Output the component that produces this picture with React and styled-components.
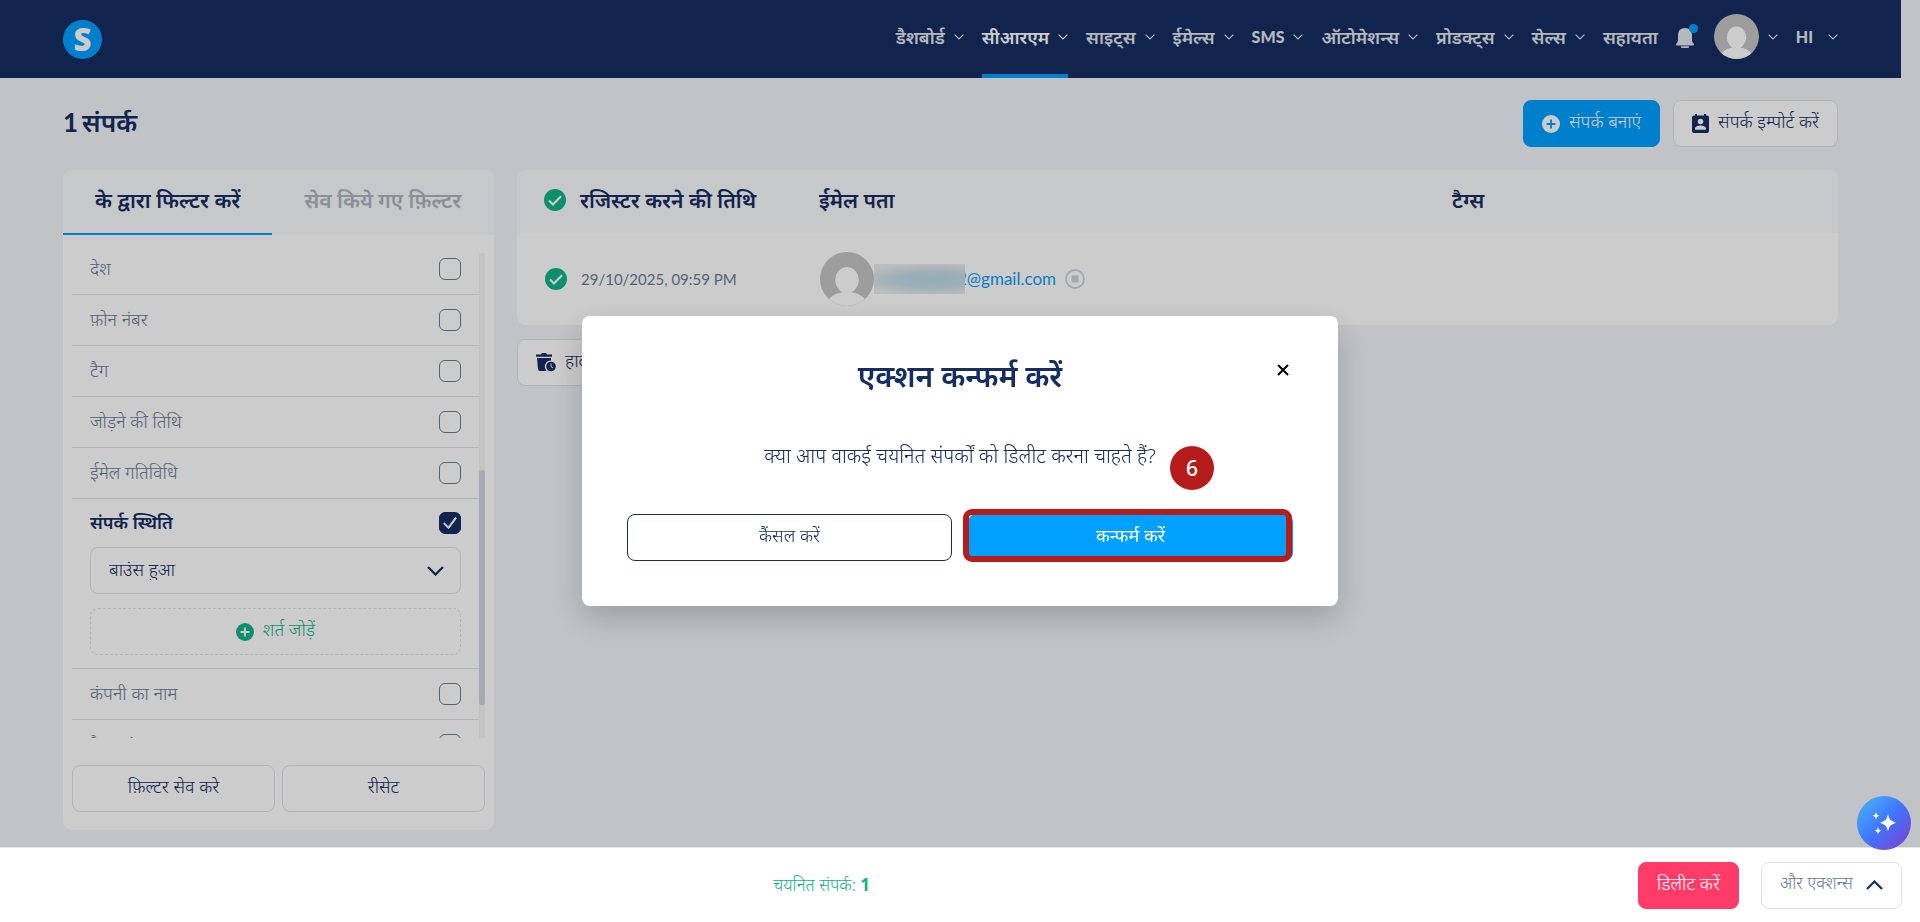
import React from "react";
import styled, { createGlobalStyle } from "styled-components";
import { HiMiniCheck } from "react-icons/hi2";

const GlobalStyle = createGlobalStyle`
  *,
  *::before,
  *::after {
    box-sizing: border-box;
  }

  body {
    margin: 0;
    background: #f3f4f9;
    color: #152d62;
    font-family: "Noto Sans", "Noto Sans Devanagari", sans-serif;
    font-size: 18px;
    font-weight: 300;
    line-height: 22px;
    overflow: hidden;
  }

  button,
  input,
  select {
    font: inherit;
    color: inherit;
  }

  button {
    cursor: pointer;
  }

  h1,
  h2,
  p,
  ul {
    margin: 0;
    padding: 0;
  }

  ul {
    list-style: none;
  }

  a {
    color: inherit;
    text-decoration: none;
  }

  b {
    font-weight: 700;
  }
`;

const Page = styled.div`
  min-height: 100vh;
`;

const Header = styled.header`
  display: flex;
  align-items: center;
  justify-content: space-between;
  height: 78px;
  margin-right: 19px;
  padding: 0 63px;
  background: #152d62;
  color: #e9ebef;
`;

const Logo = styled.a`
  display: flex;
  align-items: center;
  justify-content: center;
  width: 39px;
  height: 39px;
  border-radius: 50%;
  background: #00a0ff;
  color: #fff;
  font-size: 31px;
  font-weight: 900;
`;

const Nav = styled.nav`
  display: flex;
  align-items: center;
  gap: 18px;
  height: 100%;
`;

const NavItem = styled.a`
  display: flex;
  align-items: center;
  gap: ${({ $gap = 9 }) => $gap}px;
  height: 100%;
  padding-bottom: 5px;
  font-family: ${({ $latin }) => ($latin ? "Lato, sans-serif" : "inherit")};
  font-size: ${({ $latin }) => ($latin ? 16 : 18)}px;
  font-weight: ${({ $latin }) => ($latin ? 900 : 600)};
  white-space: nowrap;
  color: ${({ $active }) => ($active ? "#fff" : "#e3e6ec")};
  box-shadow: ${({ $active }) => ($active ? "inset 0 -4px #00a0ff" : "none")};
`;

const Bell = styled.button`
  position: relative;
  display: flex;
  margin-right: 2px;
  padding: 0 0 2px;
  border: 0;
  background: none;
  color: #e3e6ec;
`;

const BellDot = styled.span`
  position: absolute;
  top: -4px;
  right: -4px;
  width: 9px;
  height: 9px;
  border-radius: 50%;
  background: #00a0ff;
`;

const Content = styled.main`
  padding: 22px 82px 0 63px;
`;

const TitleBar = styled.div`
  display: flex;
  align-items: center;
  justify-content: space-between;
  margin-bottom: 23px;
`;

const Title = styled.h1`
  display: flex;
  gap: 4px;
  padding-bottom: 4px;
  font-size: 26px;
  font-weight: 600;
  line-height: 32px;
`;

const Count = styled.span`
  font-family: Lato, "Noto Sans", sans-serif;
  font-weight: 700;
`;

const Actions = styled.div`
  display: flex;
  gap: 13px;
`;

const palettes = {
  plain: { background: "#fff", border: "#dee2e6", color: "#152d62" },
  primary: { background: "#00a0ff", border: "#00a0ff", color: "#fff" },
  outline: { background: "#fff", border: "#152d62", color: "#152d62" },
  danger: { background: "#ff3c69", border: "#ff3c69", color: "#fff" },
};

const Button = styled.button`
  display: flex;
  align-items: center;
  justify-content: center;
  gap: 9px;
  flex: ${({ $grow }) => ($grow ? "1 1 0" : "none")};
  height: 47px;
  padding: 0 18px;
  border: 1px solid ${({ $kind = "plain" }) => palettes[$kind].border};
  border-radius: 8px;
  background: ${({ $kind = "plain" }) => palettes[$kind].background};
  color: ${({ $kind = "plain" }) => palettes[$kind].color};
  font-weight: ${({ $strong }) => ($strong ? 400 : 300)};
  white-space: nowrap;
`;

const ButtonText = styled.span`
  padding-bottom: 5px;
`;

const Columns = styled.div`
  display: grid;
  grid-template-columns: 431px 1fr;
  align-items: start;
  gap: 23px;
`;

const Panel = styled.section`
  border-radius: 9px;
  background: #fff;
  overflow: hidden;
`;

const Tabs = styled.div`
  display: flex;
  height: 65px;
  background: #f9fafc;
`;

const Tab = styled.button`
  padding: 0 32px 4px;
  border: 0;
  border-bottom: 2px solid ${({ $active }) => ($active ? "#00a0ff" : "transparent")};
  background: none;
  color: ${({ $active }) => ($active ? "#152d62" : "#adb5c0")};
  font-size: 21px;
  font-weight: 600;
  white-space: nowrap;
`;

const FilterScroll = styled.div`
  display: grid;
  grid-template-columns: 1fr 6px;
  height: 485px;
  margin: 18px 9px 0;
  overflow: hidden;
`;

const FilterList = styled.ul`
  margin-top: -9px;
`;

const FilterItem = styled.li`
  border-bottom: 1px solid #dee2e6;
  padding: ${({ $open }) => ($open ? "0 18px 13px" : "0 18px")};
`;

const FilterLabel = styled.label`
  display: flex;
  align-items: center;
  justify-content: space-between;
  height: ${({ $checked }) => ($checked ? 48 : 50)}px;
  color: ${({ $checked }) => ($checked ? "#152d62" : "#6b7a95")};
  font-weight: ${({ $checked }) => ($checked ? 600 : 300)};
`;

const FilterName = styled.span`
  padding-bottom: 2px;
`;

const CheckWrap = styled.span`
  display: grid;
  place-items: center;

  & > * {
    grid-area: 1 / 1;
  }

  svg {
    color: #fff;
    pointer-events: none;
  }
`;

const Checkbox = styled.input`
  appearance: none;
  width: 22px;
  height: 22px;
  margin: 0;
  border: 1px solid #6b7a95;
  border-radius: 6px;

  &:checked {
    border-color: #152d62;
    background: #152d62;
  }
`;

const SelectWrap = styled.div`
  display: grid;
  align-items: center;
  margin-bottom: 14px;

  & > * {
    grid-area: 1 / 1;
  }

  svg {
    justify-self: end;
    margin-right: 17px;
    pointer-events: none;
  }
`;

const Select = styled.select`
  appearance: none;
  width: 100%;
  height: 47px;
  padding: 0 18px 4px;
  border: 1px solid #dee2e6;
  border-radius: 8px;
  background: #fff;
`;

const AddCondition = styled(Button)`
  width: 100%;
  border-style: dashed;
  color: #13b28a;
`;

const Track = styled.div`
  padding-top: 217px;
  border-radius: 3px;
  background: #f4f4f4;
`;

const Thumb = styled.div`
  height: 235px;
  border-radius: 3px;
  background: #cbd5e0;
`;

const FilterActions = styled.div`
  display: flex;
  gap: 7px;
  padding: 27px 9px 18px;
`;

const Table = styled.table`
  width: 100%;
  margin-bottom: 14px;
  border-collapse: separate;
  border-spacing: 0;
  border-radius: 9px;
  background: #fff;
  table-layout: fixed;
  text-align: left;
  overflow: hidden;
`;

const HeadCell = styled.th`
  width: ${({ $width }) => $width};
  height: 63px;
  padding: ${({ $first }) => ($first ? "0 0 4px 27px" : "0 0 4px")};
  background: #f9fafc;
  font-size: 21px;
  font-weight: 600;
`;

const Cell = styled.td`
  height: 92px;
  padding: ${({ $first }) => ($first ? "0 0 0 28px" : "0 0 0 1px")};
  color: #6b7a95;
`;

const CellLine = styled.div`
  display: flex;
  align-items: center;
  gap: ${({ $gap = 14 }) => $gap}px;
`;

const Latin = styled.span`
  font-family: Lato, "Noto Sans", sans-serif;
  font-size: 15px;
  font-weight: 400;
`;

const Email = styled.a`
  display: flex;
  align-items: center;
  color: #0c9cf4;
  font-family: Lato, "Noto Sans", sans-serif;
  font-size: 17px;
  font-weight: 400;
`;

const HiddenName = styled.span`
  position: relative;
  width: 91px;
  height: 30px;
  margin-right: -8px;
  background: radial-gradient(ellipse 85% 55% at 65% 52%, #b9d8ea 0%, #c5dce7 50%, #ebeeeb 100%);
`;

const Overlay = styled.div`
  position: fixed;
  inset: 0;
  display: flex;
  align-items: center;
  justify-content: center;
  background: rgba(0, 0, 0, 0.2);
`;

const Modal = styled.div`
  width: 756px;
  padding: 45px;
  border-radius: 8px;
  background: #fff;
  box-shadow: 0 12px 32px rgba(0, 0, 0, 0.2);
`;

const ModalHeader = styled.div`
  display: grid;
  grid-template-columns: 1fr auto 1fr;
  align-items: center;
  height: 30px;
`;

const ModalTitle = styled.h2`
  grid-column: 2;
  font-size: 30px;
  font-weight: 600;
  line-height: 30px;
`;

const Close = styled.button`
  display: flex;
  justify-self: end;
  padding: 0 4px 12px;
  border: 0;
  background: none;
`;

const ModalText = styled.p`
  padding: 51px 0 45px;
  text-align: center;
  font-size: 20px;
  line-height: 27px;
`;

const ModalActions = styled.div`
  position: relative;
  display: flex;
  gap: 16px;
`;

const Highlight = styled.span`
  position: absolute;
  inset: -5px 1px -1px calc(50% + 3px);
  border: 6px solid #b71c1c;
  border-radius: 9px;
  pointer-events: none;
`;

const StepBadge = styled.span`
  position: absolute;
  top: -68px;
  right: 79px;
  display: flex;
  align-items: center;
  justify-content: center;
  width: 44px;
  height: 44px;
  border-radius: 50%;
  background: #b71c1c;
  color: #fff;
  font-size: 21px;
  font-weight: 500;
`;

const BottomBar = styled.footer`
  position: fixed;
  inset: auto 0 0;
  display: grid;
  grid-template-columns: 1fr auto 1fr;
  align-items: center;
  height: 75px;
  padding: 0 18px 0 0;
  border-top: 1px solid #e4e4e6;
  background: #fff;
`;

const Selected = styled.p`
  grid-column: 2;
  margin-right: 259px;
  color: #13b28a;
  font-size: 17px;
`;

const BottomActions = styled.div`
  display: flex;
  justify-content: flex-end;
  gap: 22px;
`;

const MoreButton = styled(Button)`
  gap: 13px;
  color: #6b7a95;
  font-size: 17px;

  svg {
    color: #152d62;
  }
`;

const Assistant = styled.button`
  position: fixed;
  right: 9px;
  bottom: 72px;
  display: flex;
  align-items: center;
  justify-content: center;
  width: 54px;
  height: 54px;
  border: 0;
  border-radius: 50%;
  background: linear-gradient(135deg, #47acf8 10%, #3f76fb 50%, #7c3fd2 95%);
`;

const NavChevron = () => (
  <svg width="10" height="6" viewBox="0 0 10 6" fill="none" stroke="currentColor" strokeWidth="1.2" aria-hidden="true">
    <path d="M.6.6 5 4.9 9.4.6" />
  </svg>
);

const Chevron = ({ up }) => (
  <svg width="17" height="10" viewBox="0 0 17 10" fill="none" stroke="currentColor" strokeWidth="2.2" aria-hidden="true">
    <path d={up ? "M1 9 8.500 1.500 16 9" : "M1 1l7.500 7.500L16 1"} />
  </svg>
);

const Avatar = ({ size }) => (
  <svg width={size} height={size} viewBox="0 0 54 54" aria-hidden="true">
    <clipPath id={`avatar-${size}`}>
      <circle cx="27" cy="27" r="27" />
    </clipPath>
    <g clipPath={`url(#avatar-${size})`} fill="#fff">
      <path d="M0 0h54v54H0z" fill="#c5c5c5" />
      <ellipse cx="27" cy="28" rx="11.700" ry="13" />
      <path d="M22 38h10v2.500c5 .4 10 2.500 13 7l6 10H3l6-10c3-4.500 8-6.600 13-7z" />
    </g>
  </svg>
);

const PlusIcon = ({ mark }) => (
  <svg width="18" height="18" viewBox="0 0 18 18" aria-hidden="true">
    <circle cx="9" cy="9" r="9" fill="currentColor" />
    <path d="M9 4.600v8.800M4.600 9h8.800" stroke={mark} strokeWidth="1.800" />
  </svg>
);

const ContactIcon = () => (
  <svg width="17" height="19" viewBox="0 0 17 19" aria-hidden="true">
    <path d="M2 1.500h1V0h2v1.500h7V0h2v1.500h1a2 2 0 0 1 2 2V17a2 2 0 0 1-2 2H2a2 2 0 0 1-2-2V3.500a2 2 0 0 1 2-2z" fill="currentColor" />
    <circle cx="8.500" cy="7.500" r="2.800" fill="#fff" />
    <path d="M3 15.800v-1c0-2 3-3.200 5.500-3.200s5.500 1.200 5.500 3.200v1z" fill="#fff" />
  </svg>
);

const BellIcon = () => (
  <svg width="18" height="20" viewBox="0 0 18 20" fill="currentColor" aria-hidden="true">
    <path d="M9 0c4.500 0 7 3 7 7v4.500c0 2 .6 3 1.600 4 .7.800.4 2-.8 2H1.200c-1.200 0-1.500-1.200-.8-2 1-1 1.600-2 1.600-4V7c0-4 2.500-7 7-7zM5 18.200h8V19a1 1 0 0 1-1 1H6a1 1 0 0 1-1-1z" />
  </svg>
);

const DoneIcon = () => (
  <svg width="22" height="22" viewBox="0 0 22 22" fill="none" aria-hidden="true">
    <circle cx="11" cy="11" r="11" fill="#13b28a" />
    <path d="m5 11.500 4 4L17 7.300" stroke="#fff" strokeWidth="2.200" />
  </svg>
);

const StoppedIcon = () => (
  <svg width="20" height="20" viewBox="0 0 20 20" aria-hidden="true">
    <circle cx="10" cy="10" r="9" fill="none" stroke="#cbd2dc" strokeWidth="1.800" />
    <path d="M6.500 6.500h7v7h-7z" fill="#cbd2dc" />
  </svg>
);

const TrashIcon = () => (
  <svg width="20" height="19" viewBox="0 0 20 19" aria-hidden="true">
    <path d="M0 1.500h5L6 0h4l1 1.500h5v2.300H0zM1 5h14v2.500a6 6 0 0 0-5 9.500l.6 1H4a2 2 0 0 1-2-2z" fill="currentColor" />
    <circle cx="15" cy="13.500" r="4.800" fill="currentColor" />
    <path d="M15 10.500v3.200l2 1.300" fill="none" stroke="#fff" />
  </svg>
);

const SparkleIcon = () => (
  <svg width="24" height="24" viewBox="0 0 24 24" fill="#fff" aria-hidden="true">
    <path d="M16 3c1.200 5.500 2.500 6.800 8 8.700-5.500 1.900-6.800 3.300-8 8.800-1.200-5.500-2.500-6.900-8-8.800 5.500-1.900 6.800-3.200 8-8.700zM4 1c.6 2.400 1.100 3 3.500 3.700C5.100 5.400 4.600 6 4 8.400 3.400 6 2.900 5.400.5 4.700 2.900 4 3.400 3.400 4 1zM6 16c.6 2.400 1.100 3 3.500 3.700C7.100 20.400 6.600 21 6 23.400 5.400 21 4.900 20.400 2.500 19.700 4.900 19 5.400 18.400 6 16z" />
  </svg>
);

const navItems = ["डैशबोर्ड", "सीआरएम", "साइट्स", "ईमेल्स", "SMS", "ऑटोमेशन्स", "प्रोडक्ट्स", "सेल्स"];

const filters = [
  "देश",
  "फ़ोन नंबर",
  "टैग",
  "जोड़ने की तिथि",
  "ईमेल गतिविधि",
  "संपर्क स्थिति",
  "कंपनी का नाम",
  "टैक्स नंबर",
];

const Filter = ({ name }) => {
  const checked = name === "संपर्क स्थिति";

  return (
    <FilterItem $open={checked}>
      <FilterLabel $checked={checked}>
        <FilterName>{name}</FilterName>
        <CheckWrap>
          <Checkbox type="checkbox" defaultChecked={checked} />
          {checked && <HiMiniCheck size={18} strokeWidth={1} />}
        </CheckWrap>
      </FilterLabel>
      {checked && (
        <>
          <SelectWrap>
            <Select aria-label={name}>
              <option>बाउंस हुआ</option>
            </Select>
            <Chevron />
          </SelectWrap>
          <AddCondition>
            <PlusIcon mark="#fff" />
            <ButtonText>शर्त जोड़ें</ButtonText>
          </AddCondition>
        </>
      )}
    </FilterItem>
  );
};

const App = () => (
  <Page>
    <GlobalStyle />
    <Header>
      <Logo href="#">S</Logo>
      <Nav>
        {navItems.map((item) => (
          <NavItem href="#" key={item} $active={item === "सीआरएम"} $latin={item === "SMS"}>
            {item}
            <NavChevron />
          </NavItem>
        ))}
        <NavItem href="#">सहायता</NavItem>
        <Bell aria-label="सूचनाएं">
          <BellIcon />
          <BellDot />
        </Bell>
        <NavItem href="#">
          <Avatar size={45} />
          <NavChevron />
        </NavItem>
        <NavItem href="#" $latin $gap={15}>
          HI
          <NavChevron />
        </NavItem>
      </Nav>
    </Header>

    <Content>
      <TitleBar>
        <Title>
          <Count>1</Count>
          संपर्क
        </Title>
        <Actions>
          <Button $kind="primary">
            <PlusIcon mark="#00a0ff" />
            <ButtonText>संपर्क बनाएं</ButtonText>
          </Button>
          <Button>
            <ContactIcon />
            <ButtonText>संपर्क इम्पोर्ट करें</ButtonText>
          </Button>
        </Actions>
      </TitleBar>

      <Columns>
        <Panel>
          <Tabs>
            <Tab $active>के द्वारा फिल्टर करें</Tab>
            <Tab>सेव किये गए फ़िल्टर</Tab>
          </Tabs>
          <FilterScroll>
            <FilterList>
              {filters.map((name) => (
                <Filter key={name} name={name} />
              ))}
            </FilterList>
            <Track>
              <Thumb />
            </Track>
          </FilterScroll>
          <FilterActions>
            <Button $grow>
              <ButtonText>फ़िल्टर सेव करे</ButtonText>
            </Button>
            <Button $grow>
              <ButtonText>रीसेट</ButtonText>
            </Button>
          </FilterActions>
        </Panel>

        <div>
          <Table>
            <thead>
              <tr>
                <HeadCell $first $width="302px">
                  <CellLine>
                    <DoneIcon />
                    रजिस्टर करने की तिथि
                  </CellLine>
                </HeadCell>
                <HeadCell $width="633px">ईमेल पता</HeadCell>
                <HeadCell>टैग्स</HeadCell>
              </tr>
            </thead>
            <tbody>
              <tr>
                <Cell $first>
                  <CellLine>
                    <DoneIcon />
                    <Latin>29/10/2025, 09:59 PM</Latin>
                  </CellLine>
                </Cell>
                <Cell>
                  <CellLine $gap={9}>
                    <Email href="#">
                      <Avatar size={54} />
                      <HiddenName />
                      2@gmail.com
                    </Email>
                    <StoppedIcon />
                  </CellLine>
                </Cell>
                <Cell />
              </tr>
            </tbody>
          </Table>
          <Button>
            <TrashIcon />
            <ButtonText>हाल ही में डिलीट किए गए</ButtonText>
          </Button>
        </div>
      </Columns>
    </Content>

    <Overlay>
      <Modal role="dialog" aria-modal="true" aria-labelledby="modal-title">
        <ModalHeader>
          <ModalTitle id="modal-title">एक्शन कन्फर्म करें</ModalTitle>
          <Close aria-label="बंद करें">
            <svg width="12" height="12" viewBox="0 0 12 12" stroke="#000" strokeWidth="2" aria-hidden="true">
              <path d="m1 1 10 10M11 1 1 11" />
            </svg>
          </Close>
        </ModalHeader>
        <ModalText>क्या आप वाकई चयनित संपर्कों को डिलीट करना चाहते हैं?</ModalText>
        <ModalActions>
          <Button $kind="outline" $grow>
            <ButtonText>कैंसल करें</ButtonText>
          </Button>
          <Button $kind="primary" $grow $strong>
            <ButtonText>कन्फर्म करें</ButtonText>
          </Button>
          <Highlight />
          <StepBadge>6</StepBadge>
        </ModalActions>
      </Modal>
    </Overlay>

    <BottomBar>
      <Selected>
        चयनित संपर्क: <b>1</b>
      </Selected>
      <BottomActions>
        <Button $kind="danger">
          <ButtonText>डिलीट करें</ButtonText>
        </Button>
        <MoreButton>
          <ButtonText>और एक्शन्स</ButtonText>
          <Chevron up />
        </MoreButton>
      </BottomActions>
    </BottomBar>
    <Assistant aria-label="सहायक">
      <SparkleIcon />
    </Assistant>
  </Page>
);

export default App;
